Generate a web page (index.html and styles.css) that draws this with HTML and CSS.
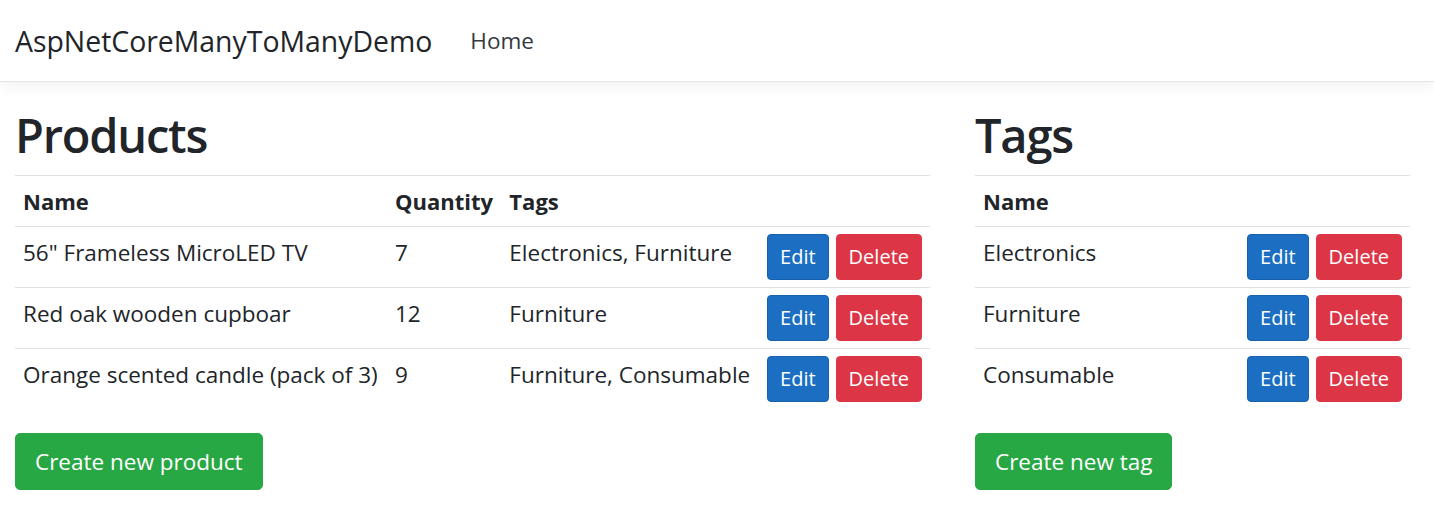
FILE: index.html
```html
<!DOCTYPE html>
<html lang="en">
<head>
<meta charset="utf-8">
<title>AspNetCoreManyToManyDemo</title>
<link rel="stylesheet" href="styles.css">
</head>
<body>
<header class="navbar">
  <a class="brand" href="#">AspNetCoreManyToManyDemo</a>
  <a class="nav-link" href="#">Home</a>
</header>
<main class="page">
  <section class="panel products">
    <h1>Products</h1>
    <table class="table">
      <thead>
        <tr><th>Name</th><th>Quantity</th><th>Tags</th><th class="actions"></th></tr>
      </thead>
      <tbody>
        <tr><td>56" Frameless MicroLED TV</td><td>7</td><td>Electronics, Furniture</td><td class="actions"><a class="btn btn-primary" href="#">Edit</a><a class="btn btn-danger" href="#">Delete</a></td></tr>
        <tr><td>Red oak wooden cupboar</td><td>12</td><td>Furniture</td><td class="actions"><a class="btn btn-primary" href="#">Edit</a><a class="btn btn-danger" href="#">Delete</a></td></tr>
        <tr><td>Orange scented candle (pack of 3)</td><td>9</td><td>Furniture, Consumable</td><td class="actions"><a class="btn btn-primary" href="#">Edit</a><a class="btn btn-danger" href="#">Delete</a></td></tr>
      </tbody>
    </table>
    <a class="btn btn-lg btn-success" href="#">Create new product</a>
  </section>
  <section class="panel tags">
    <h1>Tags</h1>
    <table class="table">
      <thead>
        <tr><th>Name</th><th class="actions"></th></tr>
      </thead>
      <tbody>
        <tr><td>Electronics</td><td class="actions"><a class="btn btn-primary" href="#">Edit</a><a class="btn btn-danger" href="#">Delete</a></td></tr>
        <tr><td>Furniture</td><td class="actions"><a class="btn btn-primary" href="#">Edit</a><a class="btn btn-danger" href="#">Delete</a></td></tr>
        <tr><td>Consumable</td><td class="actions"><a class="btn btn-primary" href="#">Edit</a><a class="btn btn-danger" href="#">Delete</a></td></tr>
      </tbody>
    </table>
    <a class="btn btn-lg btn-success" href="#">Create new tag</a>
  </section>
</main>
</body>
</html>
```
FILE: styles.css
```css
* { box-sizing: border-box; }
html, body { margin: 0; background: #fff; }
body {
  font-family: "Open Sans", "Noto Sans", sans-serif;
  color: #212529;
  font-size: 22.5px;
}
a { text-decoration: none; }

.navbar {
  display: flex;
  align-items: center;
  height: 82px;
  padding: 0 15px;
  border-bottom: 1px solid #e5e5e5;
  box-shadow: 0 5px 14px rgba(0, 0, 0, 0.05);
  margin-bottom: 22px;
}
.brand {
  color: #212529;
  font-size: 28.4px;
  margin-right: 38px;
}
.nav-link {
  color: #343a40;
  font-size: 22.5px;
}

.page {
  display: flex;
  gap: 45px;
  padding: 0 15px;
}
.products { width: 915px; }
.tags { width: 435px; }

h1 {
  margin: 0 0 9px;
  font-size: 47px;
  font-weight: 600;
  letter-spacing: -1.2px;
  line-height: 62px;
}

.table {
  width: 100%;
  border-collapse: collapse;
  margin-bottom: 24px;
}
.table th, .table td {
  padding: 7px 8px;
  border-top: 1px solid #dee2e6;
  text-align: left;
  vertical-align: top;
  line-height: 38px;
  white-space: nowrap;
}
.table th {
  font-size: 22px;
  font-weight: 700;
  line-height: 32px;
  padding-top: 9px;
  padding-bottom: 9px;
}
.actions { width: 1%; }

.btn {
  display: inline-block;
  color: #fff;
  font-size: 20px;
  line-height: 32px;
  padding: 6px 12px;
  border: 1px solid transparent;
  border-radius: 4px;
  vertical-align: top;
}
.btn + .btn { margin-left: 7px; }
.btn-primary { background: #1b6ec2; border-color: #1861ac; }
.btn-danger { background: #dc3545; border-color: #dc3545; }
.btn-success { background: #28a745; border-color: #28a745; }
.btn-lg {
  font-size: 22.5px;
  line-height: 37px;
  padding: 9px 19px;
  border-radius: 5px;
}
```
